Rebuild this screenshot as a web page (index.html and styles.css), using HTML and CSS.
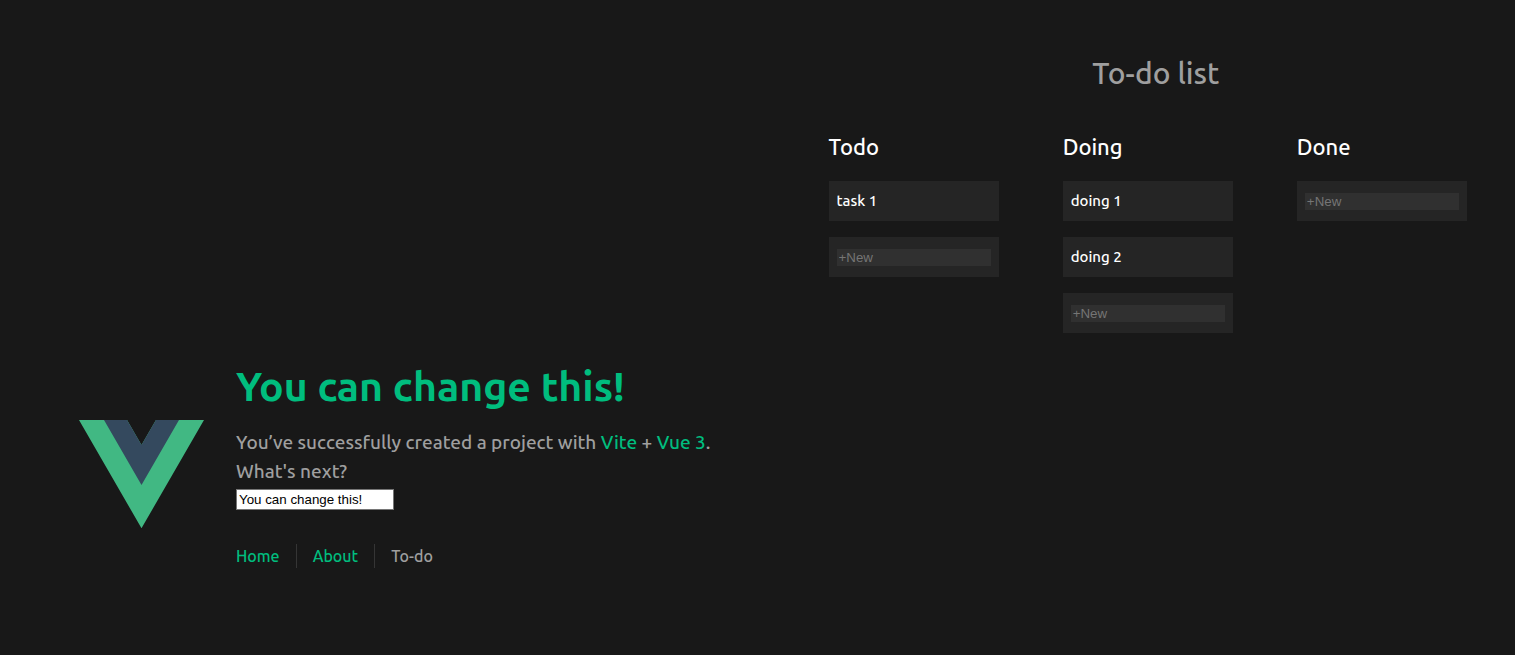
FILE: index.html
```html
<!DOCTYPE html>
<html lang="en">
<head>
  <meta charset="utf-8">
  <meta name="viewport" content="width=device-width, initial-scale=1">
  <title>To-do list</title>
  <link rel="stylesheet" href="styles.css">
</head>
<body>
  <div class="app">
    <header class="intro">
      <svg class="logo" viewBox="0 0 261.76 226.69" role="img" aria-label="Vue logo">
        <path fill="#41b883" d="M161.096.001l-30.225 52.351L100.647.001H-.005l130.877 226.688L261.749.001z"/>
        <path fill="#34495e" d="M161.096.001l-30.225 52.351L100.647.001H52.346l78.526 136.01L209.398.001z"/>
      </svg>
      <div class="wrapper">
        <h1 class="headline">You can change this!</h1>
        <p class="lead">You’ve successfully created a project with <a class="link" href="#vite">Vite</a> + <a class="link" href="#vue">Vue 3</a>.<br>What's next?</p>
        <input class="message" type="text" value="You can change this!" aria-label="Message">
        <nav class="nav">
          <a class="nav-link" href="#home">Home</a>
          <a class="nav-link" href="#about">About</a>
          <a class="nav-link current" href="#todo" aria-current="page">To-do</a>
        </nav>
      </div>
    </header>
    <main class="board">
      <h2 class="board-title">To-do list</h2>
      <div class="lists">
        <section class="list">
          <h3 class="list-title">Todo</h3>
          <div class="card">task 1</div>
          <div class="card"><input class="new-task" type="text" placeholder="+New" aria-label="New Todo task"></div>
        </section>
        <section class="list">
          <h3 class="list-title">Doing</h3>
          <div class="card">doing 1</div>
          <div class="card">doing 2</div>
          <div class="card"><input class="new-task" type="text" placeholder="+New" aria-label="New Doing task"></div>
        </section>
        <section class="list">
          <h3 class="list-title">Done</h3>
          <div class="card"><input class="new-task" type="text" placeholder="+New" aria-label="New Done task"></div>
        </section>
      </div>
    </main>
  </div>
</body>
</html>
```
FILE: styles.css
```css
*,
*::before,
*::after {
  box-sizing: border-box;
  margin: 0;
}

body {
  min-height: 100vh;
  background: #181818;
  color: #9f9f9f;
  font-family: Ubuntu, "Noto Sans", sans-serif;
  font-size: 16px;
  font-weight: 500;
  line-height: 24px;
}

.app {
  display: grid;
  grid-template-columns: 1fr 1fr;
  min-height: 100vh;
  padding: 0 32px;
}

.intro {
  display: flex;
  align-items: center;
  justify-content: center;
  align-self: end;
  padding-bottom: 70px;
}

.logo {
  width: 125px;
  flex: none;
  margin-right: 32px;
}

.headline {
  color: #00bd7e;
  font-size: 41px;
  font-weight: 600;
  line-height: 46px;
  margin-bottom: 19px;
}

.lead {
  font-size: 19px;
  line-height: 29px;
}

.link,
.nav-link {
  color: #00bd7e;
  text-decoration: none;
}

.message {
  display: block;
  width: 158px;
  height: 21px;
  margin-top: 3px;
  padding: 1px 2px;
  border: 1px solid #767676;
  background: #fff;
  color: #000;
  font-family: "Liberation Sans", Arial, sans-serif;
}

.nav {
  display: flex;
  padding: 34px 0 17px;
}

.nav-link {
  padding: 0 16px;
  border-left: 1px solid #353535;
}

.nav-link:first-child {
  padding-left: 0;
  border-left: 0;
}

.nav-link.current {
  color: #9f9f9f;
}

.board {
  padding: 48px 0 0 71px;
}

.board-title {
  font-size: 30px;
  font-weight: 500;
  line-height: 50px;
  text-align: center;
}

.lists {
  display: flex;
  gap: 64px;
  padding: 30px 16px 0 0;
}

.list {
  display: flex;
  flex: 1;
  flex-direction: column;
  gap: 16px;
}

.list-title {
  color: #fff;
  font-size: 22px;
  font-weight: 500;
  line-height: 37px;
}

.card {
  display: flex;
  align-items: center;
  height: 40px;
  padding: 0 8px;
  background: #252525;
  color: #fff;
  font-size: 15px;
}

.new-task {
  width: 100%;
  height: 17px;
  padding: 1px 2px;
  border: 0;
  background: #303030;
  color: #fff;
  font-family: "Liberation Sans", Arial, sans-serif;
}

.new-task::placeholder {
  color: #757575;
}
```
